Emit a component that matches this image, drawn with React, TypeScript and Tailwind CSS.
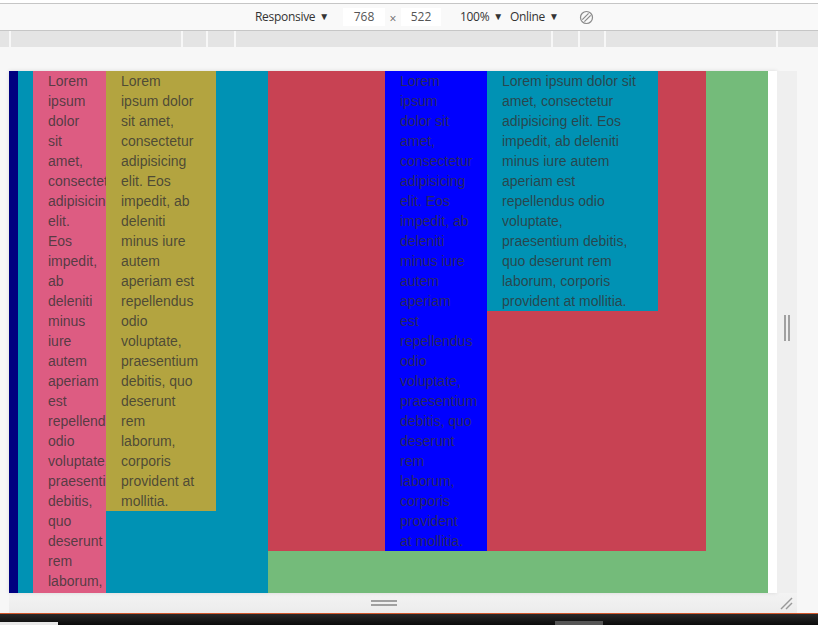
import React from 'react';

// --- TEXT ---
const LOREM =
  'Lorem ipsum dolor sit amet, consectetur adipisicing elit. Eos impedit, ab deleniti minus iure autem aperiam est repellendus odio voluptate, praesentium debitis, quo deserunt rem laborum, corporis provident at mollitia.';

// media query bar segments (x positions of separators)
const RULER = [9, 172, 25, 28, 317, 27, 26, 172, 42];

function Caret() {
  return <span className="ml-[4px] text-[10px] relative top-[-1px]">▼</span>;
}

function RotateIcon() {
  return (
    <svg width="15" height="15" viewBox="0 0 15 15" fill="none" stroke="#8a8a8a" strokeWidth="1.2">
      <circle cx="7.5" cy="7.5" r="6" />
      <path d="M3.3 9.6 L9.6 3.3" />
      <path d="M5.4 11.7 L11.7 5.4" />
    </svg>
  );
}

function Toolbar() {
  return (
    <div className="pt-[3px] bg-white">
      <div className="h-[28px] bg-[#f9f9f9] border-t border-b border-[#c6c6c6] flex items-center pl-[255px] text-[12px] text-[#333]" style={{ fontFamily: '"Open Sans", "Noto Sans", sans-serif' }}>
        <span className="w-[72px] whitespace-nowrap tracking-[-0.3px]">Responsive<Caret /></span>
        <span className="ml-[16px] w-[42px] h-[18px] bg-white text-[#555] flex items-center justify-center">768</span>
        <span className="w-[16px] text-center text-[#666] relative top-[2px]">×</span>
        <span className="w-[40px] h-[18px] bg-white text-[#555] flex items-center justify-center">522</span>
        <span className="ml-[19px] w-[44px] whitespace-nowrap tracking-[-0.3px]">100%<Caret /></span>
        <span className="ml-[6px] w-[52px] whitespace-nowrap tracking-[-0.3px]">Online<Caret /></span>
        <span className="ml-[17px] flex items-center"><RotateIcon /></span>
      </div>
      <div className="h-[17px] bg-[#e4e4e4] flex border-b border-[#f7f7f7]">
        {RULER.map((w, i) => (
          <div key={i} className={i === 0 ? 'h-full' : 'h-full border-l-2 border-[#f7f7f7]'} style={{ width: w }} />
        ))}
      </div>
    </div>
  );
}

function Col({ className, children }: { className: string; children?: React.ReactNode }) {
  return <div className={'px-[15px] shrink-0 ' + className}>{children}</div>;
}

function Page() {
  return (
    <div className="w-[768px] h-[522px] bg-white overflow-hidden flex shadow-[0_0_4px_rgba(0,0,0,0.12)] text-[14px] leading-5 text-[#333]/80" style={{ fontFamily: '"Liberation Sans", Arial, sans-serif' }}>
      <div className="w-[9px] shrink-0 bg-[#000080]" />
      <div className="w-[250px] shrink-0 bg-[#0092b4] pl-[15px] flex items-start">
        <Col className="w-[73px] bg-[#dd5c82] overflow-hidden">{LOREM}</Col>
        <Col className="w-[110px] bg-[#b3a440]">{LOREM}</Col>
      </div>
      <div className="w-[500px] shrink-0 bg-[#74bb7a] flex items-start">
        <div className="w-[438px] bg-[#c84253] pl-[117px] flex items-start">
          <Col className="w-[102px] bg-[#0000ff]">{LOREM}</Col>
          <Col className="w-[171px] bg-[#0092b4]">{LOREM}</Col>
        </div>
      </div>
    </div>
  );
}

export default function App() {
  return (
    <div className="w-[818px] h-[625px] overflow-hidden bg-[#f7f7f7] flex flex-col">
      <Toolbar />

      {/* device frame */}
      <div className="pl-[9px] pt-[23px]">
        <div className="flex">
          <Page />
          <div className="w-[20px] bg-[#efefef] flex items-center justify-center">
            <div className="flex gap-[2px] h-[26px] mt-[-8px]">
              <div className="w-[2px] h-full bg-[#a0a0a0]" />
              <div className="w-[2px] h-full bg-[#a0a0a0]" />
            </div>
          </div>
        </div>
        <div className="w-[788px] h-[20px] bg-gradient-to-b from-[#f3f3f3] to-[#ececec] flex items-center">
          <div className="ml-[362px] w-[26px] flex flex-col gap-[2px]">
            <div className="h-[2px] bg-[#a0a0a0]" />
            <div className="h-[2px] bg-[#a0a0a0]" />
          </div>
          <svg className="ml-auto mr-[4px]" width="13" height="13" viewBox="0 0 13 13" stroke="#999" strokeWidth="1.4">
            <path d="M1 12 L12 1" />
            <path d="M6 12 L12 6" />
          </svg>
        </div>
      </div>

      {/* window edge */}
      <div className="h-[1px] bg-[#d2572c]" />
      <div className="flex-1 bg-gradient-to-b from-[#2a2a2a] to-[#0b0b0b] flex items-end">
        <div className="w-[58px] h-[3px] bg-[#e8e8e8]" />
        <div className="ml-[497px] w-[48px] h-[4px] bg-[#555]" />
      </div>
    </div>
  );
}
